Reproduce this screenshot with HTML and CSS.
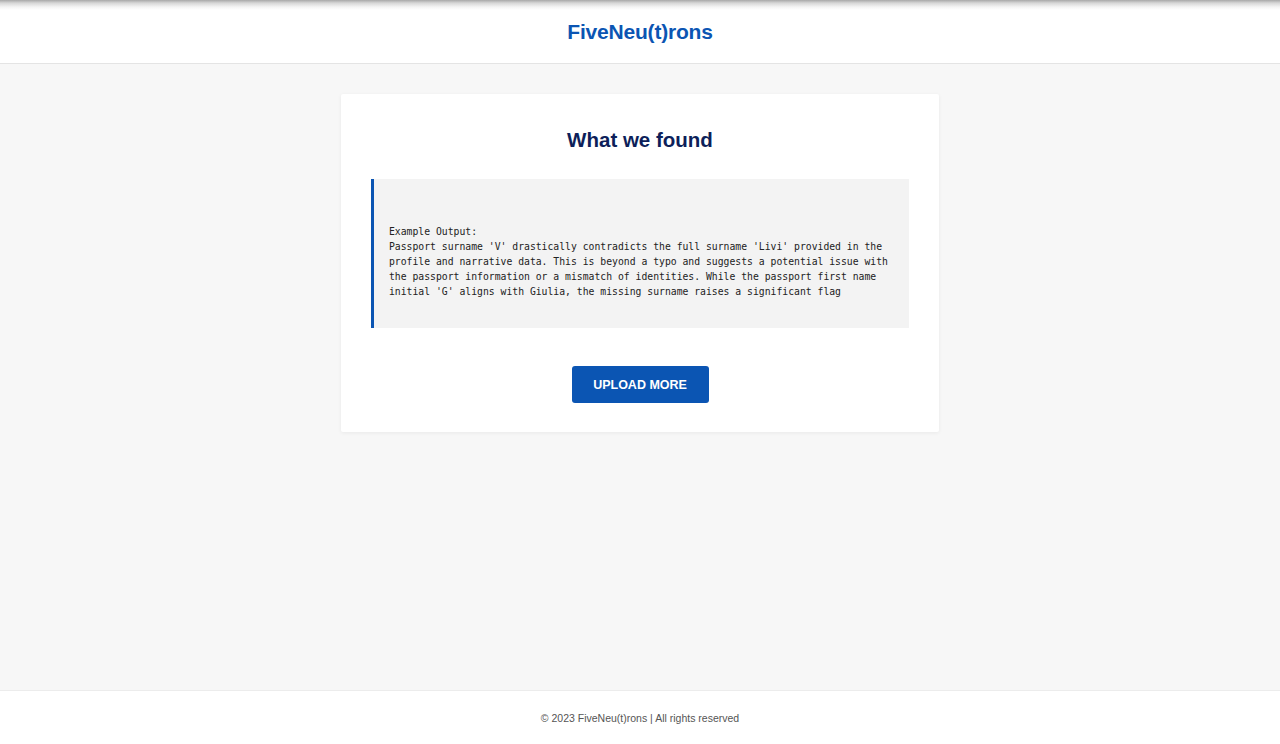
FILE: index.html
```html
<!DOCTYPE html>
<html lang="en">
<head>
<meta charset="utf-8">
<title>FiveNeu(t)rons</title>
<link rel="stylesheet" href="styles.css">
</head>
<body>
<header class="site-header">
  <h1 class="brand">FiveNeu(t)rons</h1>
</header>
<main class="main">
  <section class="card">
    <h2 class="card-title">What we found</h2>
    <pre class="result">


Example Output:
Passport surname 'V' drastically contradicts the full surname 'Livi' provided in the
profile and narrative data. This is beyond a typo and suggests a potential issue with
the passport information or a mismatch of identities. While the passport first name
initial 'G' aligns with Giulia, the missing surname raises a significant flag

</pre>
    <div class="actions">
      <button class="btn" type="button">UPLOAD MORE</button>
    </div>
  </section>
</main>
<footer class="site-footer">
  <p class="copy">© 2023 FiveNeu(t)rons | All rights reserved</p>
</footer>
</body>
</html>
```

FILE: styles.css
```css
html, body {
  margin: 0;
  padding: 0;
}
body {
  min-height: 100vh;
  display: flex;
  flex-direction: column;
  background: #f7f7f7;
  font-family: "Liberation Sans", Arial, sans-serif;
}
.site-header {
  height: 63px;
  background: linear-gradient(to bottom, #a8a8a8 0px, #d6d6d6 3px, #f4f4f4 7px, #ffffff 10px);
  border-bottom: 1px solid #e4e4e4;
  display: flex;
  align-items: center;
  justify-content: center;
}
.brand {
  margin: 0;
  padding-top: 1px;
  font-size: 21px;
  font-weight: 700;
  color: #0b55b3;
  letter-spacing: -0.2px;
}
.main {
  flex: 1;
  display: flex;
  justify-content: center;
  align-items: flex-start;
  padding-top: 30px;
}
.card {
  width: 538px;
  background: #ffffff;
  padding: 30px 30px 29px;
  box-shadow: 0 1px 4px rgba(0, 0, 0, 0.06);
  border-radius: 2px;
}
.card-title {
  margin: 0 0 23px;
  text-align: center;
  font-size: 20.5px;
  line-height: 32px;
  font-weight: 700;
  color: #0d1f5a;
  padding-top: 0;
}
.result {
  margin: 0;
  background: #f3f3f3;
  border-left: 3px solid #0b55b3;
  padding: 15px 15px 14px 15px;
  font-family: "DejaVu Sans Mono", monospace;
  font-size: 9.75px;
  line-height: 15px;
  color: #222;
  white-space: pre;
}
.actions {
  display: flex;
  justify-content: center;
  margin-top: 38px;
}
.btn {
  width: 137px;
  height: 37px;
  border: none;
  border-radius: 3px;
  background: #0b55b3;
  color: #ffffff;
  font-family: "Liberation Sans", Arial, sans-serif;
  font-size: 12.5px;
  font-weight: 700;
  cursor: pointer;
}
.site-footer {
  height: 53px;
  background: #ffffff;
  border-top: 1px solid #ececec;
  display: flex;
  align-items: center;
  justify-content: center;
}
.copy {
  margin: 0;
  padding-top: 0;
  font-size: 10.5px;
  color: #555;
}
```
